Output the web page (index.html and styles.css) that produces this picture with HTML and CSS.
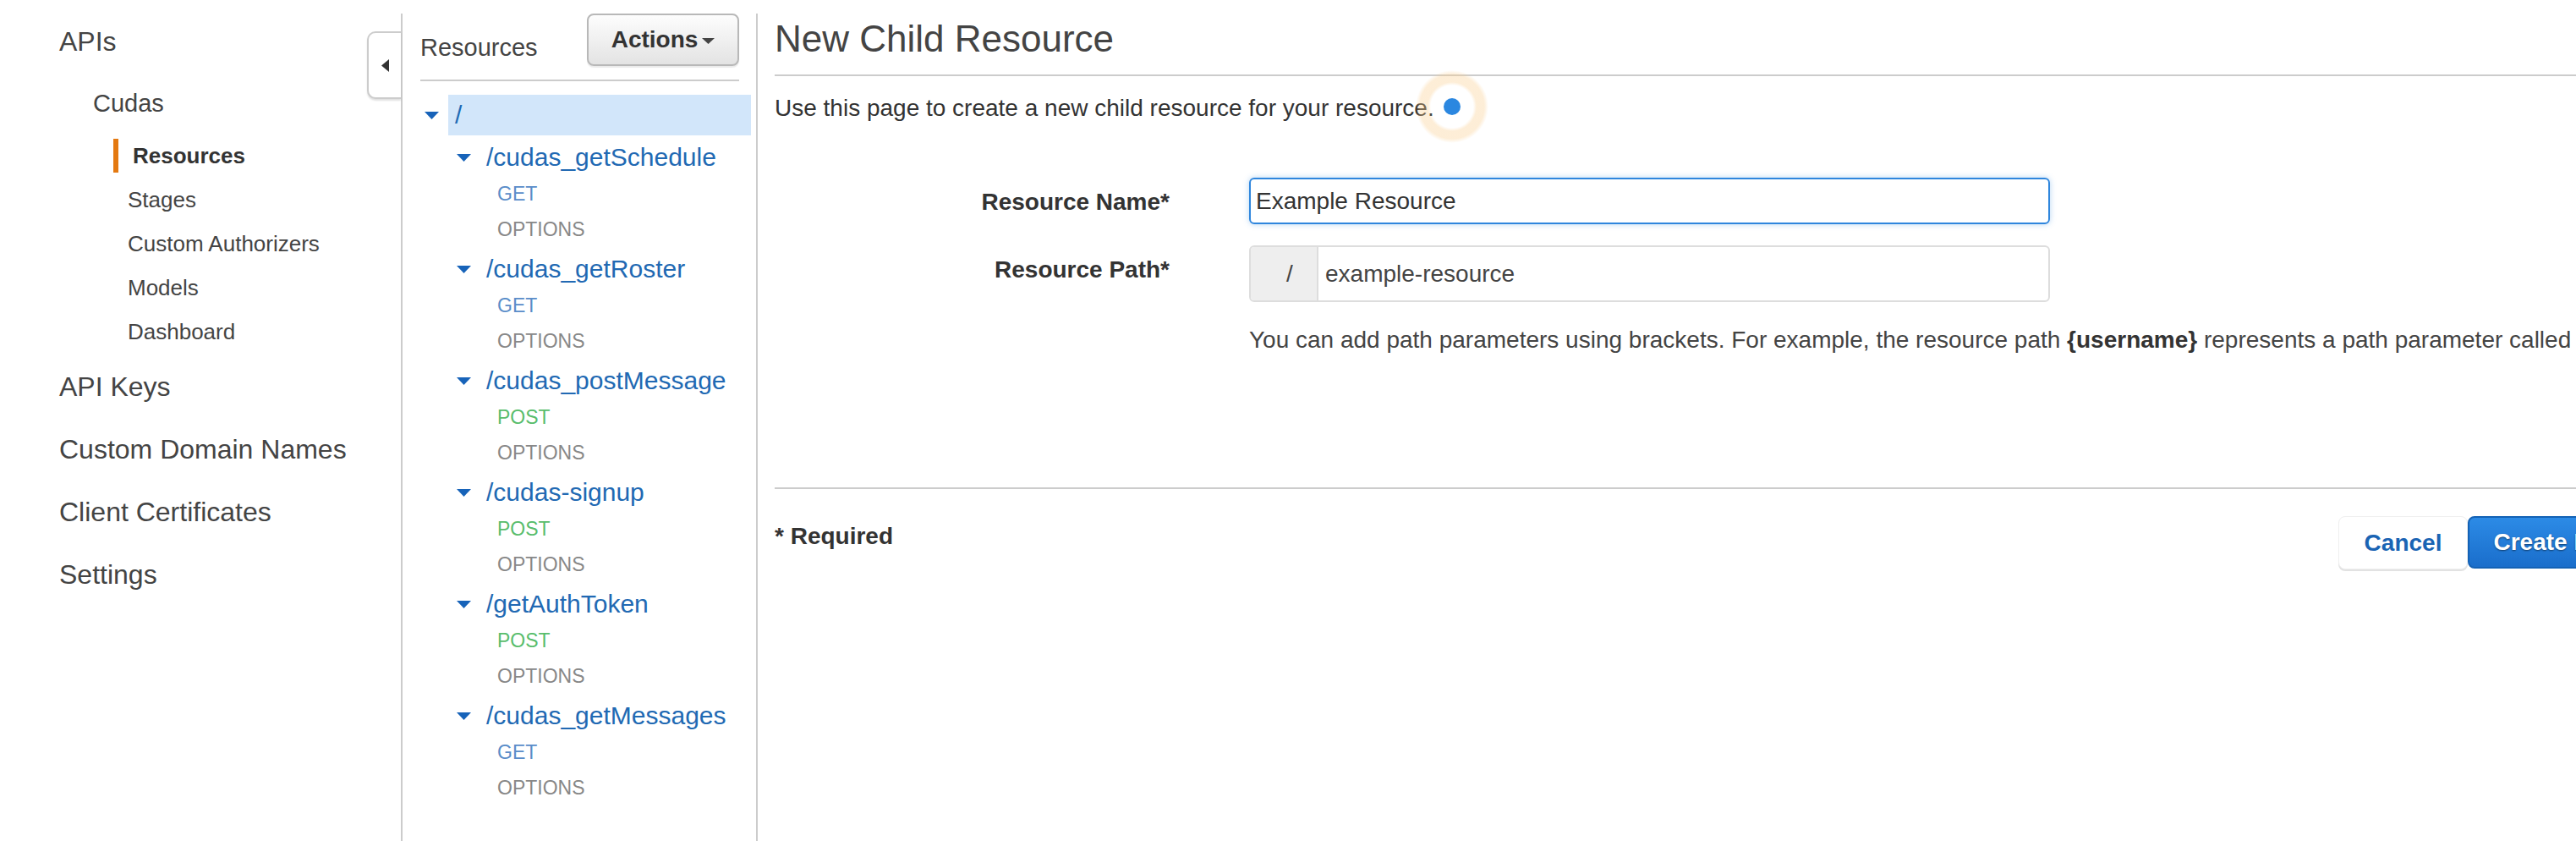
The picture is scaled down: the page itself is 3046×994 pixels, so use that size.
FILE: index.html
```html
<!DOCTYPE html>
<html lang="en">
<head>
<meta charset="utf-8">
<title>New Child Resource</title>
<link rel="stylesheet" href="styles.css">
</head>
<body>
<div class="app">
  <nav class="sidenav">
    <div class="nav-title">APIs</div>
    <div class="nav-api">Cudas</div>
    <ul class="nav-sub">
      <li class="active">Resources</li>
      <li>Stages</li>
      <li>Custom Authorizers</li>
      <li>Models</li>
      <li>Dashboard</li>
    </ul>
    <ul class="nav-main">
      <li>API Keys</li>
      <li>Custom Domain Names</li>
      <li>Client Certificates</li>
      <li>Settings</li>
    </ul>
  </nav>

  <section class="resources">
    <button class="collapse-tab" aria-label="Collapse"><svg class="collapse-arrow" viewBox="0 0 9 15"><polygon points="9,0 9,15 0,7.5"/></svg></button>
    <div class="res-header">
      <h2 class="res-title">Resources</h2>
      <button class="actions-btn">Actions<svg class="caret" viewBox="0 0 15 7"><polygon points="0,0 15,0 7.5,7"/></svg></button>
    </div>
    <div class="tree">
      <div class="tree-root">
        <svg class="tri" viewBox="0 0 17 9"><polygon points="0,0 17,0 8.5,9"/></svg>
        <span class="root-label">/</span>
      </div>
      <div class="group">
        <div class="path-row"><svg class="tri" viewBox="0 0 17 9"><polygon points="0,0 17,0 8.5,9"/></svg><span class="path">/cudas_getSchedule</span></div>
        <div class="method get">GET</div>
        <div class="method options">OPTIONS</div>
      </div>
      <div class="group">
        <div class="path-row"><svg class="tri" viewBox="0 0 17 9"><polygon points="0,0 17,0 8.5,9"/></svg><span class="path">/cudas_getRoster</span></div>
        <div class="method get">GET</div>
        <div class="method options">OPTIONS</div>
      </div>
      <div class="group">
        <div class="path-row"><svg class="tri" viewBox="0 0 17 9"><polygon points="0,0 17,0 8.5,9"/></svg><span class="path">/cudas_postMessage</span></div>
        <div class="method post">POST</div>
        <div class="method options">OPTIONS</div>
      </div>
      <div class="group">
        <div class="path-row"><svg class="tri" viewBox="0 0 17 9"><polygon points="0,0 17,0 8.5,9"/></svg><span class="path">/cudas-signup</span></div>
        <div class="method post">POST</div>
        <div class="method options">OPTIONS</div>
      </div>
      <div class="group">
        <div class="path-row"><svg class="tri" viewBox="0 0 17 9"><polygon points="0,0 17,0 8.5,9"/></svg><span class="path">/getAuthToken</span></div>
        <div class="method post">POST</div>
        <div class="method options">OPTIONS</div>
      </div>
      <div class="group">
        <div class="path-row"><svg class="tri" viewBox="0 0 17 9"><polygon points="0,0 17,0 8.5,9"/></svg><span class="path">/cudas_getMessages</span></div>
        <div class="method get">GET</div>
        <div class="method options">OPTIONS</div>
      </div>
    </div>
  </section>

  <main class="main">
    <h1 class="page-title">New Child Resource</h1>
    <p class="intro">Use this page to create a new child resource for your resource. <span class="dot-wrap"><span class="halo"></span><span class="dot"></span></span></p>
    <div class="form">
      <div class="label">Resource Name*</div>
      <div class="name-input">Example Resource</div>
      <div class="label">Resource Path*</div>
      <div class="path-box"><span class="path-prefix">/</span><span class="path-value">example-resource</span></div>
      <div class="help">You can add path parameters using brackets. For example, the resource path <b>{username}</b> represents a path parameter called 'username'.</div>
    </div>
    <div class="footer">
      <div class="required">* Required</div>
      <div class="btns">
        <button class="btn-cancel">Cancel</button>
        <button class="btn-create">Create Resource</button>
      </div>
    </div>
  </main>
</div>
</body>
</html>
```

FILE: styles.css
```css
* { box-sizing: border-box; }
html, body { margin: 0; padding: 0; background: #fff; overflow: hidden; }
body {
  font-family: "Liberation Sans", Arial, Helvetica, sans-serif;
  color: #444;
  width: 3046px;
  height: 994px;
}
button { font-family: inherit; cursor: pointer; }

.app {
  display: flex;
  width: 3046px;
  height: 994px;
  padding-top: 16px;
  overflow: hidden;
}

/* ---------- left navigation ---------- */
.sidenav {
  flex: 0 0 476px;
  border-right: 2px solid #ccc;
  padding: 13px 0 0 70px;
}
.nav-title { font-size: 32px; line-height: 40px; height: 40px; color: #444; }
.nav-api { font-size: 29px; line-height: 40px; margin-top: 33px; padding-left: 40px; color: #444; }
.nav-sub {
  list-style: none;
  margin: 16px 0 0 64px;
  padding: 6px 0;
  display: flex;
  flex-direction: column;
  gap: 12px;
}
.nav-sub li { font-size: 26px; line-height: 40px; padding-left: 17px; color: #444; }
.nav-sub li.active { border-left: 6px solid #e47911; font-weight: bold; color: #333; }
.nav-main {
  list-style: none;
  margin: 19px 0 0;
  padding: 0;
  display: flex;
  flex-direction: column;
  gap: 34px;
}
.nav-main li { font-size: 32px; line-height: 40px; color: #444; }

/* ---------- resources panel ---------- */
.resources {
  flex: 0 0 420px;
  border-right: 2px solid #ccc;
  position: relative;
}
.collapse-tab {
  position: absolute;
  left: -42px;
  top: 21px;
  width: 40px;
  height: 80px;
  padding: 0;
  border: 2px solid #ccc;
  border-right: none;
  border-radius: 10px 0 0 10px;
  background: #fff;
  box-shadow: 0 2px 2px rgba(0, 0, 0, 0.12);
  display: flex;
  align-items: center;
  justify-content: center;
}
.collapse-arrow { width: 9px; height: 15px; fill: #333; }

.res-header {
  display: flex;
  justify-content: space-between;
  align-items: flex-start;
  height: 80px;
  margin: 0 20px 0 21px;
  padding-bottom: 16px;
  border-bottom: 2px solid #ccc;
}
.res-title {
  margin: 23px 0 0;
  font-size: 29px;
  line-height: 34px;
  font-weight: normal;
  color: #444;
}
.actions-btn {
  width: 180px;
  height: 62px;
  padding: 0;
  border: 2px solid #b8b8b8;
  border-radius: 8px;
  background: linear-gradient(#fdfdfd, #e3e3e3);
  box-shadow: 0 2px 1px rgba(0, 0, 0, 0.08);
  font-size: 28px;
  font-weight: bold;
  color: #333;
  display: flex;
  align-items: center;
  justify-content: center;
  gap: 5px;
}
.caret { width: 15px; height: 7px; fill: #444; margin-top: 2px; }

.tree { padding: 16px 6px 0 26px; }
.tri { width: 17px; height: 9px; flex: 0 0 17px; fill: #1763b9; }
.tree-root { display: flex; align-items: center; height: 48px; }
.root-label {
  flex: 1;
  margin-left: 11px;
  height: 48px;
  padding-left: 8px;
  background: #d2e6fa;
  font-size: 30px;
  line-height: 48px;
  color: #1f6bb5;
}
.group { padding-top: 4px; }
.path-row { display: flex; align-items: center; height: 44px; margin-left: 38px; }
.path {
  margin-left: 11px;
  padding-left: 7px;
  font-size: 30px;
  line-height: 44px;
  color: #2169b3;
  white-space: nowrap;
}
.method { height: 42px; line-height: 42px; font-size: 23px; padding-left: 86px; }
.get { color: #5a8dc9; }
.post { color: #59bd6c; }
.options { color: #888; }

/* ---------- main ---------- */
.main {
  flex: 0 0 2325px;
  padding: 0 20px;
}
.page-title {
  margin: 0;
  padding: 4px 0 16px;
  border-bottom: 2px solid #ccc;
  font-size: 44px;
  line-height: 52px;
  font-weight: normal;
  color: #444;
}
.intro {
  margin: 18px 0 0;
  font-size: 28px;
  line-height: 40px;
  color: #333;
}
.dot-wrap {
  position: relative;
  display: inline-block;
  width: 20px;
  height: 20px;
  margin-left: 3px;
  vertical-align: 1px;
}
.dot {
  position: absolute;
  left: 0;
  top: 0;
  width: 20px;
  height: 20px;
  border-radius: 50%;
  background: #2b87e0;
}
.halo {
  position: absolute;
  left: -33px;
  top: -33px;
  width: 86px;
  height: 86px;
  border-radius: 50%;
  background: radial-gradient(circle, rgba(255, 255, 255, 0) 0 25px, rgba(250, 205, 140, 0.35) 29px, rgba(250, 205, 140, 0.35) 38px, rgba(250, 205, 140, 0) 43px);
}

.form {
  display: grid;
  grid-template-columns: 467px 947px;
  column-gap: 94px;
  row-gap: 25px;
  margin-top: 62px;
}
.label {
  padding-top: 9px;
  font-size: 28px;
  line-height: 40px;
  font-weight: bold;
  text-align: right;
  color: #333;
}
.name-input {
  height: 55px;
  padding: 0 6px;
  border: 2px solid #2f86dd;
  border-radius: 6px;
  box-shadow: 0 0 7px rgba(47, 134, 221, 0.35);
  font-size: 28px;
  line-height: 51px;
  color: #333;
}
.path-box {
  display: flex;
  height: 67px;
  border: 2px solid #ddd;
  border-radius: 6px;
  overflow: hidden;
}
.path-prefix {
  flex: 0 0 80px;
  display: flex;
  align-items: center;
  justify-content: center;
  padding-left: 14px;
  background: #eee;
  border-right: 2px solid #ddd;
  font-size: 28px;
  color: #444;
}
.path-value {
  display: flex;
  align-items: center;
  padding-left: 8px;
  font-size: 28px;
  color: #444;
}
.help {
  grid-column: 2;
  font-size: 28px;
  line-height: 40px;
  color: #444;
  white-space: nowrap;
}
.help b { color: #333; }

.footer {
  margin-top: 154px;
  padding-top: 32px;
  border-top: 2px solid #ccc;
  display: flex;
  justify-content: space-between;
  align-items: flex-start;
}
.required {
  padding-top: 4px;
  font-size: 28px;
  line-height: 40px;
  font-weight: bold;
  color: #333;
}
.btns { display: flex; }
.btn-cancel {
  height: 63px;
  padding: 0 30px;
  border: 1px solid #efefef;
  border-radius: 8px;
  background: #fff;
  box-shadow: 0 2px 0 #e2e2e2;
  font-size: 28px;
  font-weight: bold;
  color: #1a64b4;
}
.btn-create {
  height: 62px;
  padding: 0 28px;
  border: 2px solid #1462b5;
  border-radius: 8px;
  background: linear-gradient(#2c8be6, #1a6ecb);
  font-size: 28px;
  font-weight: bold;
  color: #fff;
  text-shadow: 0 1px 2px rgba(0, 0, 0, 0.5);
  white-space: nowrap;
}
```
